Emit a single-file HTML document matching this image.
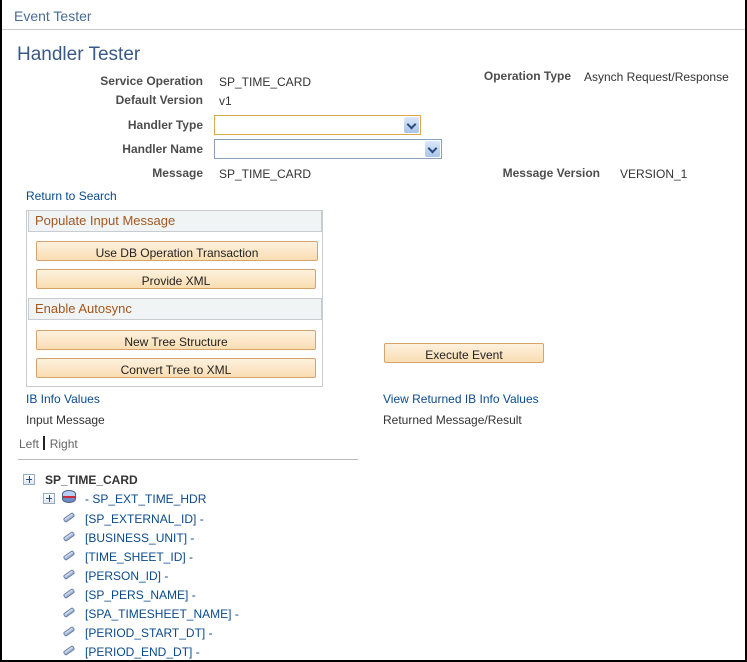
<!DOCTYPE html>
<html><head><meta charset="utf-8"><style>
*{margin:0;padding:0;box-sizing:border-box}
body{width:747px;height:662px;background:#fff;font-family:"Liberation Sans",Arial,sans-serif;font-size:12px;color:#333;position:relative;overflow:hidden}
.frame{position:absolute;left:0;top:0;width:747px;height:662px;border-left:2px solid #000;border-right:2px solid #000;border-bottom:2px solid #000}
.a{position:absolute;white-space:nowrap;line-height:14px}
.lb{font-weight:bold;color:#4d4d4d;text-align:right}
.lk{color:#0a4a8c}
.sel{position:absolute;height:20px;border:1px solid #8aa0b8;background:#fff}
.sel .ar{position:absolute;right:1px;top:1px;width:15px;height:16px;background:linear-gradient(#dce8f8,#a9c3ea);border-radius:2px}
.sel .ar:after{content:"";position:absolute;left:4px;top:4px;width:5px;height:5px;border-right:2px solid #2b4a78;border-bottom:2px solid #2b4a78;transform:rotate(45deg)}
.btn{position:absolute;height:20px;border:1px solid #d4a36e;border-radius:2px;background:linear-gradient(#fdf1de,#f9ddb2);text-align:center;line-height:23px;color:#222;font-size:12px}
.gh{position:absolute;left:28px;width:294px;height:22px;background:#f1f4f5;border:1px solid #c8ccd0;color:#a3561e;font-size:13px;line-height:20px;padding-left:6px}
.pl{position:absolute;width:12px;height:11px;border:1px solid #9ab;background:linear-gradient(#fff,#dde6f0)}
.pl:before{content:"";position:absolute;left:2px;top:4px;width:6px;height:1px;background:#2a4d80}
.pl:after{content:"";position:absolute;left:5px;top:1px;width:1px;height:7px;background:#2a4d80}
.pen{position:absolute;width:12px;height:5px;background:linear-gradient(#e8eef8,#8ca4c8);border:1px solid #6b80a8;border-radius:2px;transform:rotate(-35deg)}
</style></head><body>
<div class="a" style="left:14px;top:8px;font-size:14px;line-height:17px;color:#4a6b94">Event Tester</div>
<div style="position:absolute;left:2px;top:29px;width:743px;height:1px;background:#c9c9c9"></div>
<div class="a" style="left:17px;top:43px;font-size:19px;line-height:23px;color:#3a5a85">Handler Tester</div>

<div class="a lb" style="right:544px;top:74px">Service Operation</div>
<div class="a" style="left:219px;top:75px">SP_TIME_CARD</div>
<div class="a lb" style="right:544px;top:93px">Default Version</div>
<div class="a" style="left:219px;top:94px">v1</div>
<div class="a lb" style="right:544px;top:118px">Handler Type</div>
<div class="sel" style="left:214px;top:115px;width:207px;border-color:#d9a74f"><div class="ar"></div></div>
<div class="a lb" style="right:544px;top:142px">Handler Name</div>
<div class="sel" style="left:214px;top:139px;width:228px"><div class="ar"></div></div>
<div class="a lb" style="right:544px;top:166px">Message</div>
<div class="a" style="left:219px;top:167px">SP_TIME_CARD</div>

<div class="a lb" style="right:176px;top:69px">Operation Type</div>
<div class="a" style="left:584px;top:70px">Asynch Request/Response</div>
<div class="a lb" style="right:147px;top:166px">Message Version</div>
<div class="a" style="left:620px;top:167px">VERSION_1</div>

<div class="a lk" style="left:26px;top:189px">Return to Search</div>

<div style="position:absolute;left:26px;top:210px;width:297px;height:177px;border:1px solid #c8ccd0"></div>
<div class="gh" style="top:210px">Populate Input Message</div>
<div class="btn" style="left:36px;top:241px;width:282px">Use DB Operation Transaction</div>
<div class="btn" style="left:36px;top:269px;width:280px">Provide XML</div>
<div class="gh" style="top:298px">Enable Autosync</div>
<div class="btn" style="left:36px;top:330px;width:280px">New Tree Structure</div>
<div class="btn" style="left:36px;top:358px;width:280px">Convert Tree to XML</div>
<div class="btn" style="left:384px;top:343px;width:160px">Execute Event</div>

<div class="a lk" style="left:26px;top:392px">IB Info Values</div>
<div class="a lk" style="left:383px;top:392px">View Returned IB Info Values</div>
<div class="a" style="left:26px;top:413px">Input Message</div>
<div class="a" style="left:383px;top:413px">Returned Message/Result</div>
<div class="a" style="left:19px;top:436px;color:#666">Left <span style="display:inline-block;width:2px;height:14px;background:#222;vertical-align:-2px;margin:0 1px"></span> Right</div>
<div style="position:absolute;left:18px;top:459px;width:340px;height:1px;background:#bbb"></div>

<div class="pl" style="left:23px;top:474px"></div>
<div class="a" style="left:45px;top:473px;font-weight:bold;color:#333">SP_TIME_CARD</div>
<div class="pl" style="left:43px;top:493px"></div>
<div style="position:absolute;left:62px;top:490px;width:14px;height:13px;border-radius:7px/4px;background:linear-gradient(#b8cdef 0 45%,#d0283a 45% 65%,#6f8dc5 65%);border:1px solid #4a5f8a"></div>
<div class="a lk" style="left:85px;top:492px">- SP_EXT_TIME_HDR</div>
<div class="pen" style="left:63px;top:515px"></div><div class="a lk" style="left:85px;top:512px">[SP_EXTERNAL_ID] -</div>
<div class="pen" style="left:63px;top:534px"></div><div class="a lk" style="left:85px;top:531px">[BUSINESS_UNIT] -</div>
<div class="pen" style="left:63px;top:553px"></div><div class="a lk" style="left:85px;top:550px">[TIME_SHEET_ID] -</div>
<div class="pen" style="left:63px;top:572px"></div><div class="a lk" style="left:85px;top:569px">[PERSON_ID] -</div>
<div class="pen" style="left:63px;top:591px"></div><div class="a lk" style="left:85px;top:588px">[SP_PERS_NAME] -</div>
<div class="pen" style="left:63px;top:610px"></div><div class="a lk" style="left:85px;top:607px">[SPA_TIMESHEET_NAME] -</div>
<div class="pen" style="left:63px;top:629px"></div><div class="a lk" style="left:85px;top:626px">[PERIOD_START_DT] -</div>
<div class="pen" style="left:63px;top:648px"></div><div class="a lk" style="left:85px;top:645px">[PERIOD_END_DT] -</div>
<div class="frame"></div>
</body></html>
